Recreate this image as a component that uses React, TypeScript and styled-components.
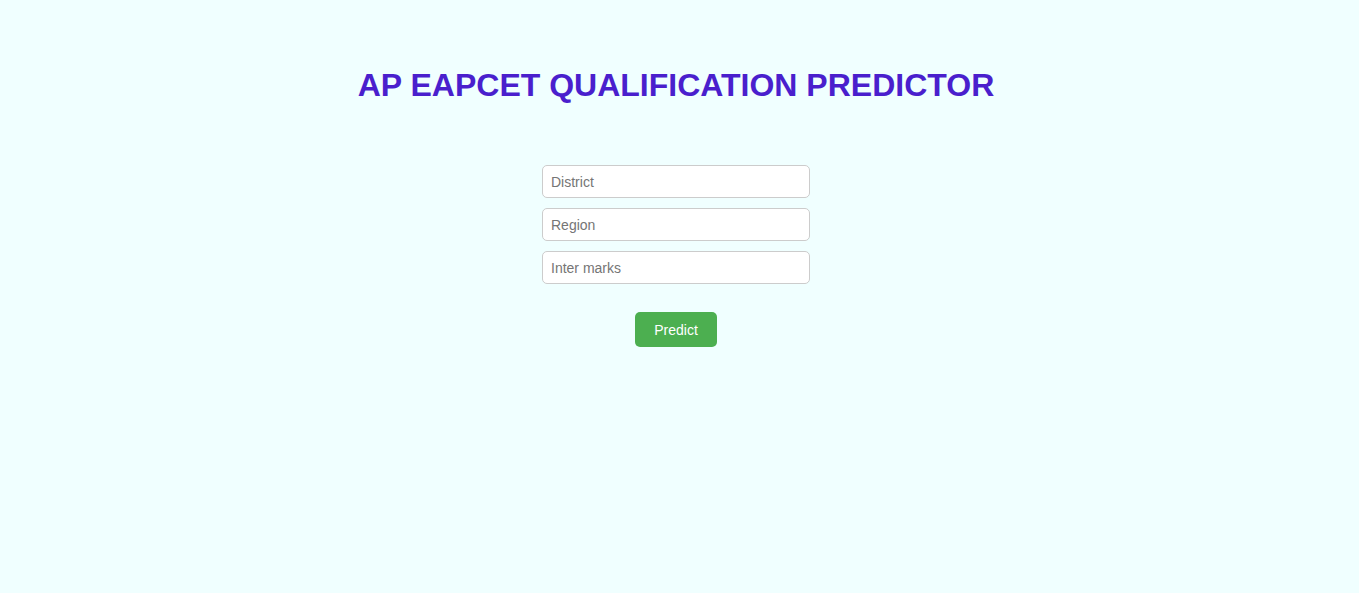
import React from "react";
import styled, { createGlobalStyle } from "styled-components";

const Global = createGlobalStyle`
  html, body {
    margin: 0;
    padding: 0;
    background: #f0ffff;
    font-family: "Liberation Sans", Arial, sans-serif;
  }
`;

const Page = styled.main`
  box-sizing: border-box;
  width: 100%;
  min-height: 593px;
  padding: 67px 7px 0 0;
  display: flex;
  flex-direction: column;
  align-items: center;
`;

const Title = styled.h1`
  margin: 0;
  font-size: 32px;
  line-height: 37px;
  font-weight: 700;
  color: #4a1fcd;
  text-align: center;
`;

const Form = styled.form`
  margin-top: 61px;
  display: flex;
  flex-direction: column;
  align-items: center;
  gap: 10px;
`;

const Field = styled.input`
  box-sizing: border-box;
  width: 268px;
  height: 33px;
  padding: 0 8px;
  border: 1px solid #cccccc;
  border-radius: 5px;
  background: #ffffff;
  font-family: "Liberation Sans", Arial, sans-serif;
  font-size: 14px;
  color: #333;
  outline: none;
  &::placeholder {
    color: #757575;
  }
`;

const Button = styled.button`
  margin-top: 18px;
  box-sizing: border-box;
  width: 82px;
  height: 35px;
  border: none;
  border-radius: 5px;
  background: #4caf50;
  color: #ffffff;
  font-family: "Liberation Sans", Arial, sans-serif;
  font-size: 14px;
  font-weight: 400;
  cursor: pointer;
`;

export default function App() {
  return (
    <>
      <Global />
      <Page>
        <Title>AP EAPCET QUALIFICATION PREDICTOR</Title>
        <Form onSubmit={(e) => e.preventDefault()}>
          <Field type="text" placeholder="District" />
          <Field type="text" placeholder="Region" />
          <Field type="text" placeholder="Inter marks" />
          <Button type="submit">Predict</Button>
        </Form>
      </Page>
    </>
  );
}
